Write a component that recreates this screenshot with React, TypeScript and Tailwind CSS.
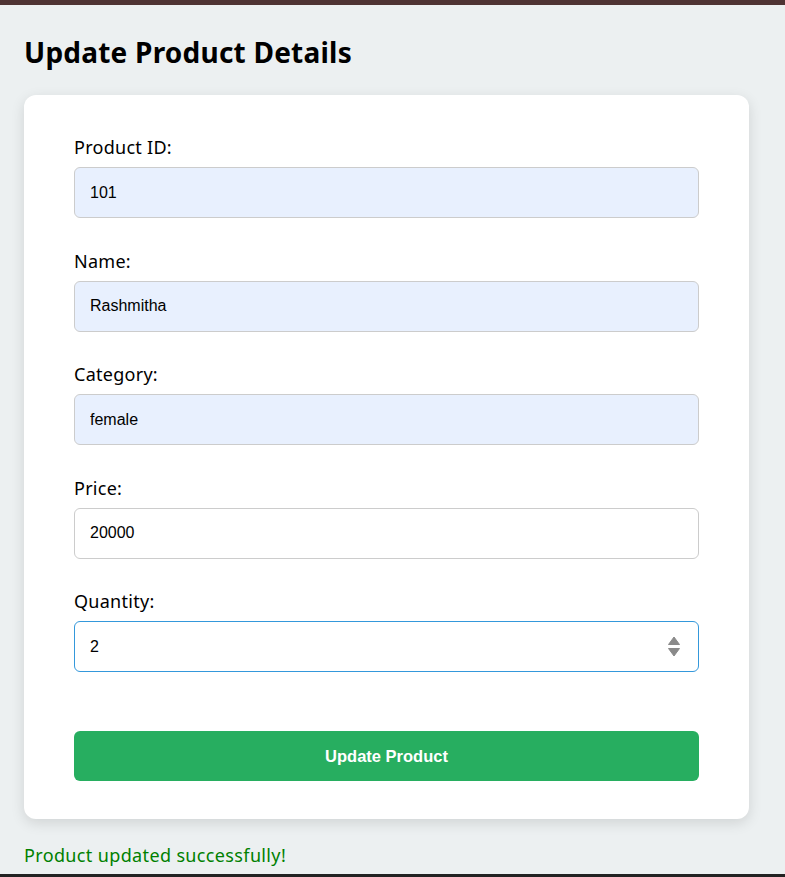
import React from "react";

const fields = [
  { label: "Product ID:", value: "101", autofill: true },
  { label: "Name:", value: "Rashmitha", autofill: true },
  { label: "Category:", value: "female", autofill: true },
  { label: "Price:", value: "20000", autofill: false },
];

export default function App() {
  return (
    <div className="h-[877px] overflow-hidden bg-[#ecf0f1] border-t-[5px] border-t-[#4e3333] border-b-[3px] border-b-[#222] flex flex-col font-['Noto_Sans',sans-serif]">
      <div className="px-6">
        <h1 className="mt-[29px] text-[28px] font-bold leading-[36px] tracking-[0.008em] text-black">
          Update Product Details
        </h1>
        <form className="mt-[25px] bg-white rounded-xl shadow-[0_4px_14px_rgba(0,0,0,0.12)] pt-10 pb-[38px] px-[50px] w-[725px]">
          {fields.map((f) => (
            <div key={f.label} className="mb-[30.5px]">
              <label className="block text-lg leading-6 tracking-[0.015em] text-black mb-2">{f.label}</label>
              <input
                readOnly
                value={f.value}
                className={`w-full h-[51px] px-[15px] rounded-md border border-[#cccccc] text-base text-black font-['Liberation_Sans',Arial,sans-serif] outline-none ${
                  f.autofill ? "bg-[#e8f0fe]" : "bg-white"
                }`}
              />
            </div>
          ))}
          <div>
            <label className="block text-lg leading-6 tracking-[0.015em] text-black mb-2">Quantity:</label>
            <div className="relative">
              <input
                readOnly
                value="2"
                className="w-full h-[51px] px-[15px] rounded-md border border-[#3498db] bg-white text-base text-black font-['Liberation_Sans',Arial,sans-serif] outline-none"
              />
              <svg
                className="absolute right-[18px] top-[15px]"
                width="14"
                height="22"
                viewBox="0 0 14 22"
              >
                <path d="M7 1 L12.5 8.5 L1.5 8.5 Z" fill="#8a8a8a" stroke="#8a8a8a" strokeLinejoin="round" />
                <path d="M7 20 L12.5 12.5 L1.5 12.5 Z" fill="#8a8a8a" stroke="#8a8a8a" strokeLinejoin="round" />
              </svg>
            </div>
          </div>
          <button
            type="button"
            className="mt-[59px] w-full h-[50px] rounded-md bg-[#27ae60] text-white font-bold text-[16.5px] font-['Liberation_Sans',Arial,sans-serif]"
          >
            Update Product
          </button>
        </form>
        <p className="mt-[24px] text-lg leading-6 tracking-[0.02em] text-[#008000]">Product updated successfully!</p>
      </div>
    </div>
  );
}
